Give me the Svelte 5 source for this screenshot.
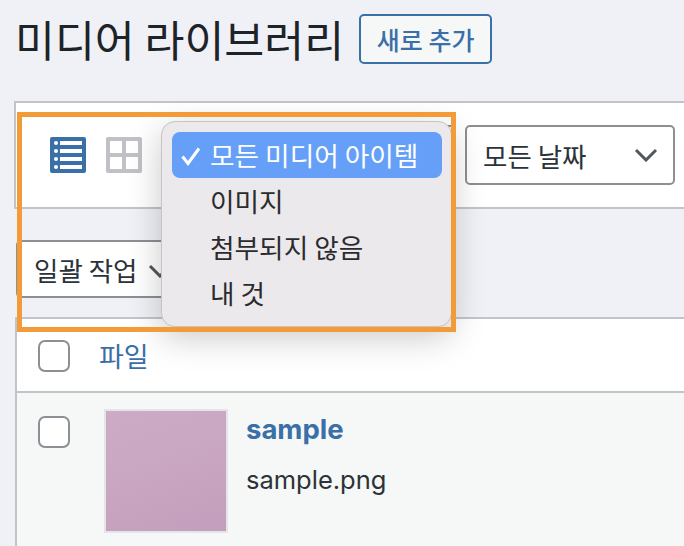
<script>
    const items = ["모든 미디어 아이템", "이미지", "첨부되지 않음", "내 것"];
</script>

<div class="page">
    <header class="head">
        <h1>미디어 라이브러리</h1>
        <button class="add">새로 추가</button>
    </header>

    <div class="filters">
        <svg class="view" width="36" height="36" viewBox="0 0 36 36">
            <rect width="36" height="36" rx="2" fill="#3a6fa8" />
            <g fill="#fff">
                <circle cx="6" cy="6" r="2" />
                <circle cx="6" cy="14" r="2" />
                <circle cx="6" cy="22" r="2" />
                <circle cx="6" cy="30" r="2" />
                <rect x="10" y="4" width="22" height="4" />
                <rect x="10" y="12" width="22" height="4" />
                <rect x="10" y="20" width="22" height="4" />
                <rect x="10" y="28" width="22" height="4" />
            </g>
        </svg>
        <svg class="view grid" width="36" height="36" viewBox="0 0 36 36">
            <rect width="36" height="36" rx="2" fill="#c0c0c6" />
            <g fill="#fff">
                <rect x="4" y="4" width="12" height="12" />
                <rect x="20" y="4" width="12" height="12" />
                <rect x="4" y="20" width="12" height="12" />
                <rect x="20" y="20" width="12" height="12" />
            </g>
        </svg>
        <div class="select type"></div>
        <div class="select date">
            <span>모든 날짜</span>
            <svg width="24" height="14" viewBox="0 0 24 14">
                <path d="M2 2l10 10L22 2" fill="none" stroke="#50575e" stroke-width="3" />
            </svg>
        </div>
    </div>

    <div class="bulk">
        <div class="select bulk-select">
            <span>일괄 작업</span>
            <svg width="24" height="14" viewBox="0 0 24 14">
                <path d="M2 2l10 10L22 2" fill="none" stroke="#50575e" stroke-width="3" />
            </svg>
        </div>
    </div>

    <div class="table">
        <div class="row top">
            <span class="check"></span>
            <a class="col-title" href="#file">파일</a>
        </div>
        <div class="row item">
            <span class="check"></span>
            <div class="thumb"></div>
            <div class="meta">
                <a class="name" href="#sample">sample</a>
                <span class="file">sample.png</span>
            </div>
        </div>
    </div>

    <ul class="menu">
        {#each items as item, i}
            <li class:on={i === 0}>
                {#if i === 0}
                    <svg class="tick" width="20" height="20" viewBox="0 0 20 20">
                        <path d="M1.5 10.5l5.5 7L18 2.5" fill="none" stroke="#fff" stroke-width="3" />
                    </svg>
                {/if}
                {item}
            </li>
        {/each}
    </ul>
    <div class="mark"></div>
</div>

<style>
    :global(body) {
        margin: 0;
        background: #f0f1f6;
    }
    .page {
        position: relative;
        width: 684px;
        height: 546px;
        overflow: hidden;
        font-family: "Noto Sans CJK KR", "Noto Sans", sans-serif;
        color: #2c3338;
    }
    .head {
        display: flex;
        align-items: center;
        gap: 15px;
        height: 49px;
        padding: 14px 0 0 15px;
    }
    h1 {
        margin: 0;
        font-size: 43.4px;
        font-weight: 400;
        line-height: 49px;
        color: #1d2327;
    }
    .add {
        width: 133px;
        height: 50px;
        padding: 0;
        box-sizing: border-box;
        border: 2px solid #3a6fa8;
        border-radius: 5px;
        background: #f6f7f7;
        color: #3a6fa8;
        font: 500 25px "Noto Sans CJK KR", sans-serif;
    }
    .filters {
        display: flex;
        align-items: center;
        box-sizing: border-box;
        height: 108px;
        margin: 38px 0 0 14px;
        padding: 0 9px 0 34px;
        background: #fff;
        border: 2px solid #c3c4c9;
        border-right: 0;
    }
    .grid {
        margin-left: 20px;
    }
    .select {
        display: flex;
        align-items: center;
        justify-content: space-between;
        box-sizing: border-box;
        background: #fff;
        border: 2px solid #8c8f94;
        border-radius: 5px;
        font-size: 26.5px;
    }
    .type {
        width: 293px;
        height: 60px;
        margin-left: 21px;
    }
    .date {
        width: 210px;
        height: 60px;
        margin-left: auto;
        padding: 0 15px 0 16px;
    }
    .bulk {
        padding: 31px 0 0 16px;
    }
    .bulk-select {
        width: 170px;
        height: 58px;
        padding: 0 12px 0 16px;
    }
    .bulk-select svg {
        margin-top: 4px;
    }
    .table {
        box-sizing: border-box;
        height: 229px;
        margin: 19px 0 0 15px;
        border: 2px solid #c3c4c9;
        border-right: 0;
        border-bottom: 0;
    }
    .row {
        display: flex;
        box-sizing: border-box;
    }
    .top {
        height: 74px;
        align-items: center;
        background: #fff;
        border-bottom: 2px solid #c3c4c9;
        padding-left: 21px;
    }
    .check {
        box-sizing: border-box;
        width: 32px;
        height: 32px;
        background: #fff;
        border: 2px solid #8c8f94;
        border-radius: 7px;
    }
    .top .check {
        margin-top: 2px;
    }
    .col-title {
        margin-left: 29px;
        color: #3a6fa8;
        font-size: 27px;
        text-decoration: none;
    }
    .item {
        height: 153px;
        background: #f6f7f7;
        padding: 16px 0 0 21px;
    }
    .item .check {
        margin-top: 7px;
    }
    .thumb {
        box-sizing: border-box;
        width: 124px;
        height: 124px;
        margin-left: 34px;
        background: linear-gradient(160deg, #cdabc6, #c49fbd);
        border: 2px solid #e6e4e8;
    }
    .meta {
        display: flex;
        flex-direction: column;
        margin-left: 18px;
        padding-top: 2px;
    }
    .name {
        color: #3a6fa8;
        font: 700 27.5px/36px "Inter", "Noto Sans", sans-serif;
        text-decoration: none;
    }
    .file {
        margin-top: 15px;
        font: 400 25.5px/36px "Inter", "Noto Sans", sans-serif;
    }
    .menu {
        position: absolute;
        left: 161px;
        top: 121px;
        box-sizing: border-box;
        width: 291px;
        height: 206px;
        margin: 0;
        padding: 10px 9px 0 10px;
        list-style: none;
        background: #ebe9ec;
        border: 1px solid #c5c4c6;
        border-radius: 14px;
        box-shadow: 0 10px 34px rgba(0, 0, 0, 0.22);
    }
    .menu li {
        position: relative;
        height: 46px;
        padding-left: 38px;
        border-radius: 8px;
        font-size: 26.7px;
        line-height: 46px;
        color: #2b2b2e;
    }
    .menu li.on {
        background: #659ff7;
        color: #fff;
    }
    .tick {
        position: absolute;
        left: 9px;
        top: 14px;
    }
    .mark {
        position: absolute;
        left: 17px;
        top: 112px;
        box-sizing: border-box;
        width: 439px;
        height: 220px;
        border: 5px solid #f29b38;
        pointer-events: none;
    }
</style>
